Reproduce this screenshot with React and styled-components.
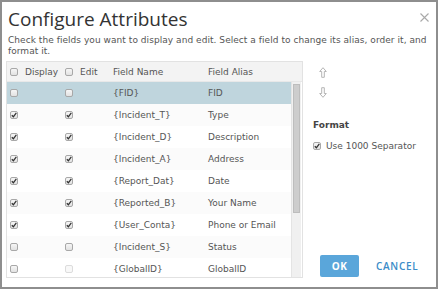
import React from "react";
import styled, { createGlobalStyle } from "styled-components";

const fields = [
  { name: "{FID}", alias: "FID", display: false, edit: false, selected: true },
  { name: "{Incident_T}", alias: "Type", display: true, edit: true },
  { name: "{Incident_D}", alias: "Description", display: true, edit: true },
  { name: "{Incident_A}", alias: "Address", display: true, edit: true },
  { name: "{Report_Dat}", alias: "Date", display: true, edit: true },
  { name: "{Reported_B}", alias: "Your Name", display: true, edit: true },
  { name: "{User_Conta}", alias: "Phone or Email", display: true, edit: true },
  { name: "{Incident_S}", alias: "Status", display: false, edit: false },
  { name: "{GlobalID}", alias: "GlobalID", display: false, edit: false, disabled: true },
];

function Check({ checked, disabled }) {
  return (
    <Box $disabled={disabled}>
      {checked && (
        <svg width="6" height="6" viewBox="0 0 6 6">
          <path d="M0.8 3.2 L2.4 4.8 L5.3 0.9" fill="none" stroke="#333" strokeWidth="1.3" />
        </svg>
      )}
    </Box>
  );
}

function Arrow({ down }) {
  return (
    <svg width="8" height="11" viewBox="0 0 8 11" style={down ? { transform: "rotate(180deg)" } : undefined}>
      <path d="M4 0.7 L7.3 4.5 H5.3 V10.3 H2.7 V4.5 H0.7 Z" fill="none" stroke="#b5b5b5" strokeWidth="1" />
    </svg>
  );
}

function App() {
  return (
    <>
      <GlobalStyle />
      <Dialog>
        <Header>
          <Title>Configure Attributes</Title>
          <Close>
            <svg width="9" height="9" viewBox="0 0 9 9">
              <path d="M0.5 0.5 L8.5 8.5 M8.5 0.5 L0.5 8.5" stroke="#a9a9a9" strokeWidth="1.1" />
            </svg>
          </Close>
        </Header>
        <Intro>
          Check the fields you want to display and edit. Select a field to change its alias, order it, and
          format it.
        </Intro>
        <Main>
          <Table>
            <HeadRow>
              <Cell><Check /><span>Display</span></Cell>
              <Cell><Check /><span>Edit</span></Cell>
              <Cell>Field Name</Cell>
              <Cell>Field Alias</Cell>
            </HeadRow>
            <Body>
              <Rows>
                {fields.map((f, i) => (
                  <Row key={f.name} $selected={f.selected} $odd={i % 2 === 1}>
                    <Cell><Check checked={f.display} /></Cell>
                    <Cell><Check checked={f.edit} disabled={f.disabled} /></Cell>
                    <Cell>{f.name}</Cell>
                    <Cell>{f.alias}</Cell>
                  </Row>
                ))}
              </Rows>
              <Track>
                <Thumb />
              </Track>
            </Body>
          </Table>
          <Side>
            <Arrows>
              <Arrow />
              <Arrow down />
            </Arrows>
            <FormatLabel>Format</FormatLabel>
            <Option>
              <Check checked />
              <span>Use 1000 Separator</span>
            </Option>
            <Buttons>
              <OkButton>OK</OkButton>
              <CancelButton>CANCEL</CancelButton>
            </Buttons>
          </Side>
        </Main>
      </Dialog>
    </>
  );
}

const GlobalStyle = createGlobalStyle`
  body {
    margin: 0;
    background: #fff;
  }
`;
const Dialog = styled.div`
  box-sizing: border-box;
  width: 438px;
  height: 289px;
  border: 2px solid #8e8e8e;
  background: #fff;
  padding: 5px 0 0 4px;
  display: flex;
  flex-direction: column;
  font-family: "DejaVu Sans", Verdana, sans-serif;
  color: #444;
`;
const Header = styled.div`
  display: flex;
  justify-content: space-between;
  align-items: flex-start;
  padding-right: 6px;
`;
const Title = styled.h1`
  margin: 0 0 0 2px;
  font-family: "Open Sans", sans-serif;
  font-weight: 400;
  font-size: 19px;
  line-height: 24px;
  color: #333;
`;
const Close = styled.span`
  display: flex;
  margin-top: 6px;
  margin-right: 1px;
`;
const Intro = styled.p`
  margin: 4px 0 0 2px;
  font-size: 9px;
  line-height: 11px;
  letter-spacing: 0.05px;
  color: #555;
`;
const Main = styled.div`
  display: flex;
  margin-top: 4px;
  flex: 1;
  min-height: 0;
  padding-bottom: 9px;
`;
const Table = styled.div`
  width: 297px;
  border: 1px solid #e2e2e2;
  display: flex;
  flex-direction: column;
  box-sizing: border-box;
  font-size: 9px;
  color: #555;
`;
const gridCols = `
  display: grid;
  grid-template-columns: 55px 48px 95px 1fr;
  padding-left: 3px;
  align-items: center;
`;
const HeadRow = styled.div`
  ${gridCols}
  height: 20px;
  background: #f3f3f3;
  border-bottom: 1px solid #e8e8e8;
  box-sizing: border-box;
`;
const Body = styled.div`
  display: flex;
  flex: 1;
  min-height: 0;
  overflow: hidden;
`;
const Rows = styled.div`
  flex: 1;
`;
const Row = styled.div`
  ${gridCols}
  height: 22px;
  background: ${(p) => (p.$selected ? "#bfd5dd" : p.$odd ? "#fbfbfb" : "#fff")};
`;
const Cell = styled.div`
  display: flex;
  align-items: center;
  gap: 7px;
  white-space: nowrap;
`;
const Box = styled.span`
  box-sizing: border-box;
  width: 8px;
  height: 8px;
  border: 1px solid ${(p) => (p.$disabled ? "#dcdcdc" : "#a8a8a8")};
  border-radius: 2px;
  background: ${(p) => (p.$disabled ? "#f8f8f8" : "linear-gradient(#f6f6f6, #e2e2e2)")};
  display: inline-flex;
  align-items: center;
  justify-content: center;
  flex: none;
`;
const Track = styled.div`
  width: 10px;
  background: #f0f0f0;
  border-left: 1px solid #e4e4e4;
  padding: 2px 1px 0;
  margin-right: 1px;
  box-sizing: border-box;
`;
const Thumb = styled.div`
  height: 129px;
  background: #cdcdcd;
  border: 1px solid #bdbdbd;
  box-sizing: border-box;
`;
const Side = styled.div`
  flex: 1;
  display: flex;
  flex-direction: column;
  padding-left: 10px;
`;
const Arrows = styled.div`
  display: flex;
  flex-direction: column;
  gap: 9px;
  padding: 6px 0 0 6px;
`;
const FormatLabel = styled.div`
  margin-top: 22px;
  font-weight: bold;
  font-size: 9px;
  color: #444;
`;
const Option = styled.div`
  display: flex;
  align-items: center;
  gap: 5px;
  margin-top: 11px;
  font-size: 9px;
  color: #555;
`;
const Buttons = styled.div`
  margin-top: auto;
  display: flex;
  align-items: center;
  gap: 17px;
  padding: 0 0 1px 7px;
`;
const OkButton = styled.button`
  width: 39px;
  height: 22px;
  border: none;
  border-radius: 2px;
  background: #5aa6da;
  color: #fff;
  font-family: "Open Sans", sans-serif;
  font-weight: 700;
  font-size: 10px;
  letter-spacing: 0.5px;
  padding: 0;
`;
const CancelButton = styled.button`
  border: none;
  background: none;
  padding: 0;
  color: #3a8cc8;
  font-family: "Open Sans", sans-serif;
  font-weight: 600;
  font-size: 10px;
  letter-spacing: 0.7px;
`;

export default App;
